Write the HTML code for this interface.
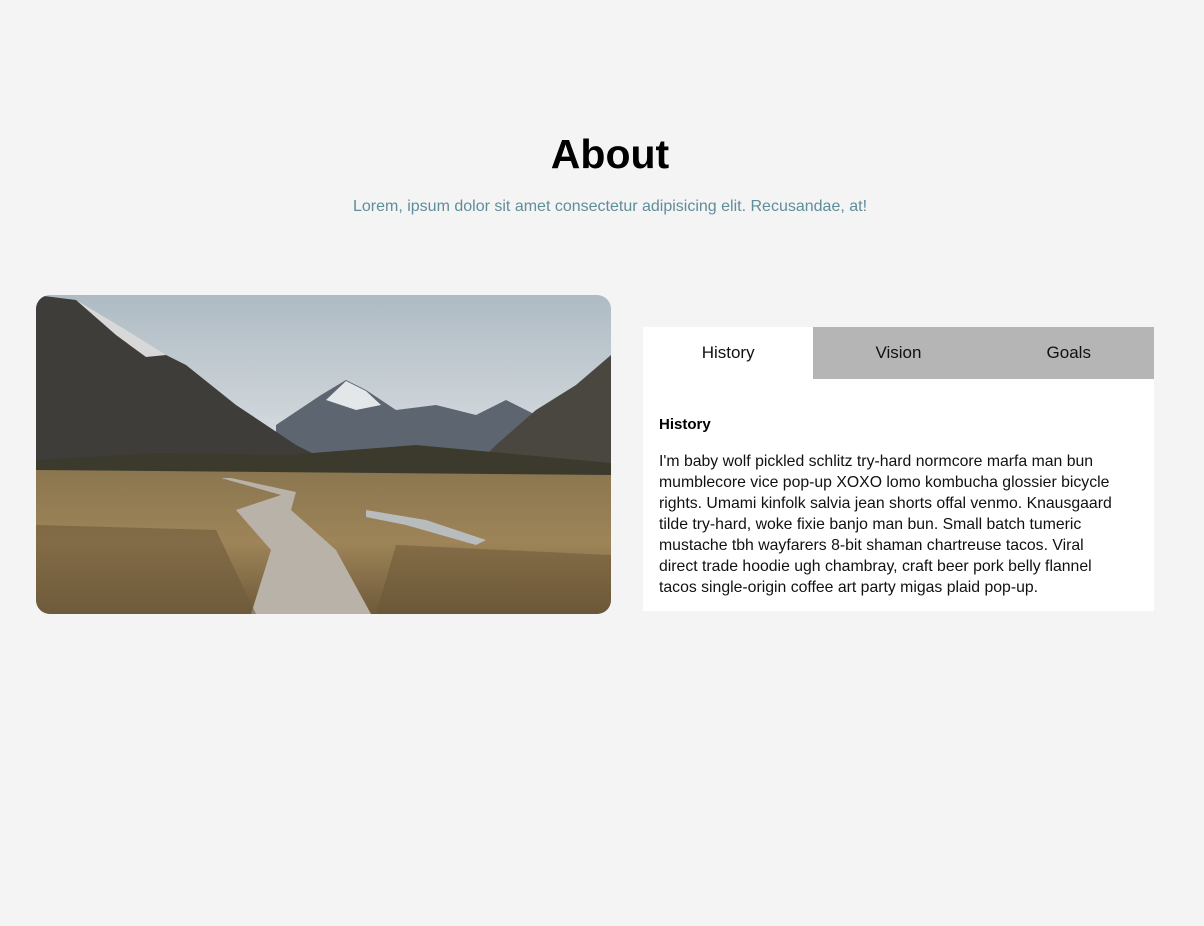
<!DOCTYPE html>
<html><head><meta charset="utf-8">
<style>
html,body{margin:0;padding:0;width:1204px;height:926px;background:#f4f4f4;overflow:hidden;font-family:"Liberation Sans","DejaVu Sans",sans-serif;}
h1{position:absolute;left:8px;width:1204px;top:128px;margin:0;text-align:center;font-size:41px;font-weight:bold;color:#000;line-height:52px;}
.sub{position:absolute;left:8px;width:1204px;top:198px;text-align:center;font-size:16px;color:#5e8e98;}
.img{position:absolute;left:36px;top:295px;width:575px;height:319px;border-radius:14px;overflow:hidden;}
.tabs{position:absolute;left:643px;top:327px;width:511px;height:52px;background:#b5b5b5;display:flex;}
.tab{width:170.3px;text-align:center;line-height:52px;font-size:17px;color:#111;}
.tab.a{background:#fff;}
.content{position:absolute;left:643px;top:379px;width:511px;height:232px;background:#fff;}
.content h3{position:absolute;left:16px;top:37px;margin:0;font-size:15px;font-weight:bold;}
.content p{position:absolute;left:16px;top:72px;margin:0;font-size:15.8px;line-height:21px;color:#111;white-space:nowrap;}
</style></head><body>
<h1>About</h1>
<div class="sub">Lorem, ipsum dolor sit amet consectetur adipisicing elit. Recusandae, at!</div>
<div class="img">
<svg width="575" height="319" viewBox="0 0 575 319">
<defs>
<linearGradient id="sky" x1="0" y1="0" x2="0" y2="1"><stop offset="0" stop-color="#aebbc4"/><stop offset="0.5" stop-color="#d9dde0"/><stop offset="1" stop-color="#c7d3db"/></linearGradient>
<linearGradient id="grass" x1="0" y1="0" x2="0" y2="1"><stop offset="0" stop-color="#8a7650"/><stop offset="0.5" stop-color="#9e8458"/><stop offset="1" stop-color="#6e5a3a"/></linearGradient>
</defs>
<rect width="575" height="319" fill="url(#sky)"/>
<path d="M240 130 L285 100 L310 85 L330 95 L360 115 L400 110 L440 120 L470 105 L500 120 L575 120 L575 175 L240 175Z" fill="#5d6670"/>
<path d="M290 105 L310 86 L330 96 L345 110 L320 115Z" fill="#e4e7ea"/>
<path d="M0 0 L40 5 L90 40 L150 70 L200 110 L260 150 L300 170 L0 175Z" fill="#3f3d3a"/>
<path d="M40 5 L90 35 L130 60 L110 62 L80 40Z" fill="#d8d8d8"/>
<path d="M575 60 L540 90 L500 115 L460 150 L440 170 L575 175Z" fill="#4a4640"/>
<path d="M0 165 L120 158 L250 160 L380 150 L575 168 L575 200 L0 200Z" fill="#3b3a2c"/>
<path d="M0 175 L575 180 L575 319 L0 319Z" fill="url(#grass)"/>
<path d="M330 215 L390 225 L450 245 L440 250 L370 230 L330 222Z" fill="#b8bcbd"/>
<path d="M185 183 L245 200 L200 215 L235 255 L215 319 L335 319 L300 255 L255 215 L260 197 L195 183Z" fill="#b9b2a8"/>
<path d="M0 230 L180 235 L220 319 L0 319Z" fill="#6f5c3c" opacity="0.6"/>
<path d="M360 250 L575 260 L575 319 L340 319Z" fill="#6a5536" opacity="0.5"/>
</svg>
</div>
<div class="tabs"><div class="tab a">History</div><div class="tab">Vision</div><div class="tab">Goals</div></div>
<div class="content">
<h3>History</h3>
<p>I'm baby wolf pickled schlitz try-hard normcore marfa man bun<br>mumblecore vice pop-up XOXO lomo kombucha glossier bicycle<br>rights. Umami kinfolk salvia jean shorts offal venmo. Knausgaard<br>tilde try-hard, woke fixie banjo man bun. Small batch tumeric<br>mustache tbh wayfarers 8-bit shaman chartreuse tacos. Viral<br>direct trade hoodie ugh chambray, craft beer pork belly flannel<br>tacos single-origin coffee art party migas plaid pop-up.</p>
</div>
</body></html>
